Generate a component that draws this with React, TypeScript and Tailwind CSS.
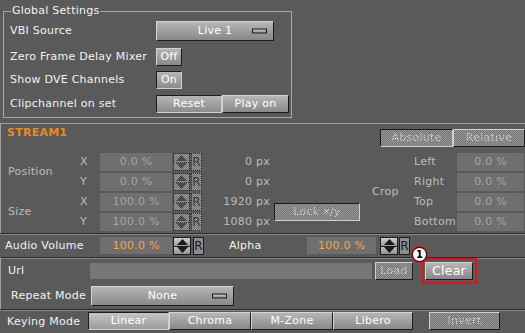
import React from "react";

const raised =
  "border border-t-[#d4d4d4] border-l-[#d4d4d4] border-b-[#1c1c1c] border-r-[#1c1c1c] bg-linear-to-b from-[#b6b6b6] to-[#888888] text-white";
const pressed =
  "border border-t-[#1c1c1c] border-l-[#1c1c1c] border-b-[#cfcfcf] border-r-[#cfcfcf] bg-linear-to-b from-[#b6b6b6] to-[#8c8c8c] text-white";
const checker =
  "bg-[repeating-conic-gradient(#9a9a9a_0_25%,#727272_0_50%)] bg-size-[2px_2px]";
const checkerText =
  "bg-[repeating-conic-gradient(#e6e6e6_0_25%,#9c9c9c_0_50%)] bg-size-[2px_2px] bg-clip-text text-transparent";

function Btn({
  children,
  className = "",
  down = false,
}: {
  children: React.ReactNode;
  className?: string;
  down?: boolean;
}) {
  return (
    <div className={`flex items-center justify-center ${down ? pressed : raised} ${className}`}>
      {children}
    </div>
  );
}

function DisabledBtn({
  children,
  className = "",
  down = false,
}: {
  children: React.ReactNode;
  className?: string;
  down?: boolean;
}) {
  const edge = down
    ? "border-t-[#1c1c1c] border-l-[#1c1c1c] border-b-[#cfcfcf] border-r-[#cfcfcf]"
    : "border-t-[#cfcfcf] border-l-[#cfcfcf] border-b-[#1c1c1c] border-r-[#1c1c1c]";
  return (
    <div className={`flex items-center justify-center border ${edge} ${checker} ${className}`}>
      <span className={checkerText}>{children}</span>
    </div>
  );
}

function Combo({ label, className = "" }: { label: string; className?: string }) {
  return (
    <div className={`relative flex items-center justify-center ${raised} ${className}`}>
      <span>{label}</span>
      <span className="absolute right-[6px] top-1/2 h-[5px] w-[15px] -translate-y-1/2 border border-[#1a1a1a] bg-linear-to-b from-[#d0d0d0] to-[#8a8a8a]" />
    </div>
  );
}

function Arrow({ up, color }: { up: boolean; color: string }) {
  return (
    <svg width="11" height="6" viewBox="0 0 11 6">
      <polygon points={up ? "5.5,0 11,6 0,6" : "0,0 11,0 5.5,6"} fill={color} />
    </svg>
  );
}

function Spin({ enabled = false, className = "" }: { enabled?: boolean; className?: string }) {
  if (enabled) {
    return (
      <div className={`flex h-[18px] w-[18px] flex-col border border-[#1c1c1c] ${className}`}>
        <div className="flex flex-1 items-center justify-center border-b border-[#1c1c1c] bg-linear-to-b from-[#d0d0d0] to-[#9a9a9a]">
          <Arrow up color="#1c1c1c" />
        </div>
        <div className="flex flex-1 items-center justify-center bg-linear-to-b from-[#c4c4c4] to-[#909090]">
          <Arrow up={false} color="#1c1c1c" />
        </div>
      </div>
    );
  }
  return (
    <div className={`flex h-[18px] w-[17px] flex-col border border-dotted border-[#2a2a2a] ${className}`}>
      <div className={`flex flex-1 items-center justify-center border-b border-dotted border-[#2a2a2a] ${checker}`}>
        <Arrow up color="#4a4a4a" />
      </div>
      <div className={`flex flex-1 items-center justify-center ${checker}`}>
        <Arrow up={false} color="#4a4a4a" />
      </div>
    </div>
  );
}

function RBtn({ enabled = false, className = "" }: { enabled?: boolean; className?: string }) {
  return enabled ? (
    <div className={`flex h-[18px] w-[11px] items-center justify-center border border-[#1c1c1c] bg-[#8c8c8c] text-[12px] tracking-normal text-[#1a1a1a] ${className}`}>
      R
    </div>
  ) : (
    <div className={`flex h-[18px] w-[11px] items-center justify-center border border-dotted border-[#2a2a2a] text-[12px] tracking-normal text-[#3a3a20] ${checker} ${className}`}>
      R
    </div>
  );
}

function Field({ value, className = "", orange = false }: { value: string; className?: string; orange?: boolean }) {
  return (
    <div className={`flex items-center justify-center bg-[#6f6f6f] ${orange ? "text-[#f0a848]" : "text-[#a4a4a4]"} ${className}`}>
      {value}
    </div>
  );
}

const sep = "border-t border-t-[#2c2c2c] shadow-[inset_0_1px_0_#858585]";

export default function App() {
  const dim = "text-[#bcbcbc]";
  const rows = [
    { axis: "X", v: "0.0 %", px: "0 px", crop: "Left" },
    { axis: "Y", v: "0.0 %", px: "0 px", crop: "Right" },
    { axis: "X", v: "100.0 %", px: "1920 px", crop: "Top" },
    { axis: "Y", v: "100.0 %", px: "1080 px", crop: "Bottom" },
  ];
  return (
    <div className="flex h-[333px] w-[525px] flex-col overflow-hidden bg-[#5a5a5a] font-['DejaVu_Sans',sans-serif] text-[11px] leading-[14px] tracking-[0.25px] text-[#f2f2f2]">
      {/* Global settings */}
      <div className="h-[123px] pl-[3px] pt-[4px]">
        <fieldset className="h-[114px] w-[289px] border border-[#a6a6a6] pl-[6px]">
          <legend className="ml-[1px] px-[1px] text-[#f2f2f2]">Global Settings</legend>
          <div className="mt-[3px] flex items-center">
            <span className="w-[146px]">VBI Source</span>
            <Combo label="Live 1" className="h-[20px] w-[118px]" />
          </div>
          <div className="mt-[7px] flex items-center">
            <span className="w-[146px]">Zero Frame Delay Mixer</span>
            <Btn className="h-[18px] w-[26px]">Off</Btn>
          </div>
          <div className="mt-[5px] flex items-center">
            <span className="w-[146px]">Show DVE Channels</span>
            <Btn down className="h-[18px] w-[26px]">On</Btn>
          </div>
          <div className="mt-[6px] flex items-center">
            <span className="w-[146px]">Clipchannel on set</span>
            <Btn down className="h-[18px] w-[66px]">Reset</Btn>
            <Btn className="h-[18px] w-[67px]">Play on</Btn>
          </div>
        </fieldset>
      </div>

      {/* Stream */}
      <div className="h-[110px] border-t border-l border-[#a2a2a2]">
        <div className="flex h-[29px] items-start justify-between">
          <span className="pl-[6px] pt-[2px] font-bold text-[#ec8a1c]">STREAM1</span>
          <div className="mt-[5px] flex">
            <DisabledBtn down className="h-[18px] w-[73px]">Absolute</DisabledBtn>
            <DisabledBtn className="h-[18px] w-[72px]">Relative</DisabledBtn>
          </div>
        </div>
        <div className="grid grid-cols-[72px_20px_72px_1px_17px_1px_11px_68px_4px_86px_12px_42px_43px_67px] grid-rows-[18px_18px_18px_18px] gap-y-[2px] pl-[7px]">
          <span className={`col-start-1 row-span-2 row-start-1 self-center ${dim}`}>Position</span>
          <span className={`col-start-1 row-span-2 row-start-3 self-center ${dim}`}>Size</span>
          {rows.map((r, i) => (
            <React.Fragment key={i}>
              <span className={`col-start-2 self-center ${dim}`} style={{ gridRowStart: i + 1 }}>
                {r.axis}
              </span>
              <Field value={r.v} className="col-start-3" />
              <Spin className="col-start-5" />
              <RBtn className="col-start-7" />
              <span className={`col-start-8 self-center text-right ${dim}`} style={{ gridRowStart: i + 1 }}>
                {r.px}
              </span>
              <span className={`col-start-13 self-center ${dim}`} style={{ gridRowStart: i + 1 }}>
                {r.crop}
              </span>
              <Field value="0.0 %" className="col-start-14" />
            </React.Fragment>
          ))}
          <div className="col-start-10 row-span-2 row-start-3 flex items-center">
            <DisabledBtn down className="h-[18px] w-[86px]">Lock x/y</DisabledBtn>
          </div>
          <span className={`col-start-12 row-span-4 row-start-1 self-center ${dim}`}>Crop</span>
        </div>
      </div>

      {/* Audio / Alpha */}
      <div className={`flex h-[24px] items-start pt-[3px] ${sep}`}>
        <span className="w-[100px] pl-[5px] pt-[2px]">Audio Volume</span>
        <Field value="100.0 %" orange className="h-[17px] w-[72px]" />
        <Spin enabled className="ml-[1px] h-[17px]" />
        <RBtn enabled className="ml-[2px]" />
        <span className="ml-[25px] w-[78px] pt-[2px]">Alpha</span>
        <Field value="100.0 %" orange className="h-[17px] w-[69px]" />
        <Spin enabled className="ml-[4px]" />
        <RBtn enabled className="ml-px" />
      </div>

      {/* Url */}
      <div className={`h-[52px] border-l border-l-[#a2a2a2] pt-[4px] ${sep}`}>
        <div className="flex items-center">
          <span className="w-[89px] pl-[7px]">Url</span>
          <div className="h-[16px] w-[282px] bg-[#777777]" />
          <DisabledBtn className="ml-[3px] h-[18px] w-[38px]">Load</DisabledBtn>
          <div className="relative ml-[12px]">
            <Btn className="h-[18px] w-[48px] text-[12.5px]">Clear</Btn>
            <div className="absolute -top-[4px] -left-[3px] -right-[4px] -bottom-[4px] border-2 border-[#e0141c]" />
            <div className="absolute -top-[15px] -left-[13px] flex h-[15px] w-[15px] items-center justify-center rounded-full border-[1.5px] border-black bg-white text-[10px] font-bold tracking-normal text-black shadow-[0_0_0_1px_#d01018]">
              1
            </div>
          </div>
        </div>
        <div className="mt-[6px] flex items-center">
          <span className="w-[90px] pl-[10px]">Repeat Mode</span>
          <Combo label="None" className="h-[20px] w-[143px]" />
        </div>
      </div>

      {/* Keying */}
      <div className={`flex flex-1 items-start pt-[2px] ${sep}`}>
        <span className="w-[88px] pl-[7px] pt-[3px]">Keying Mode</span>
        <Btn down className="h-[18px] w-[81px] from-[#c4c4c4] to-[#9c9c9c]">Linear</Btn>
        <Btn className="h-[18px] w-[82px] from-[#a6a6a6] to-[#7e7e7e]">Chroma</Btn>
        <Btn className="h-[18px] w-[82px] from-[#a6a6a6] to-[#7e7e7e]">M-Zone</Btn>
        <Btn className="h-[18px] w-[80px] from-[#a6a6a6] to-[#7e7e7e]">Libero</Btn>
        <DisabledBtn className="ml-[16px] h-[18px] w-[71px]">Invert</DisabledBtn>
      </div>
    </div>
  );
}
